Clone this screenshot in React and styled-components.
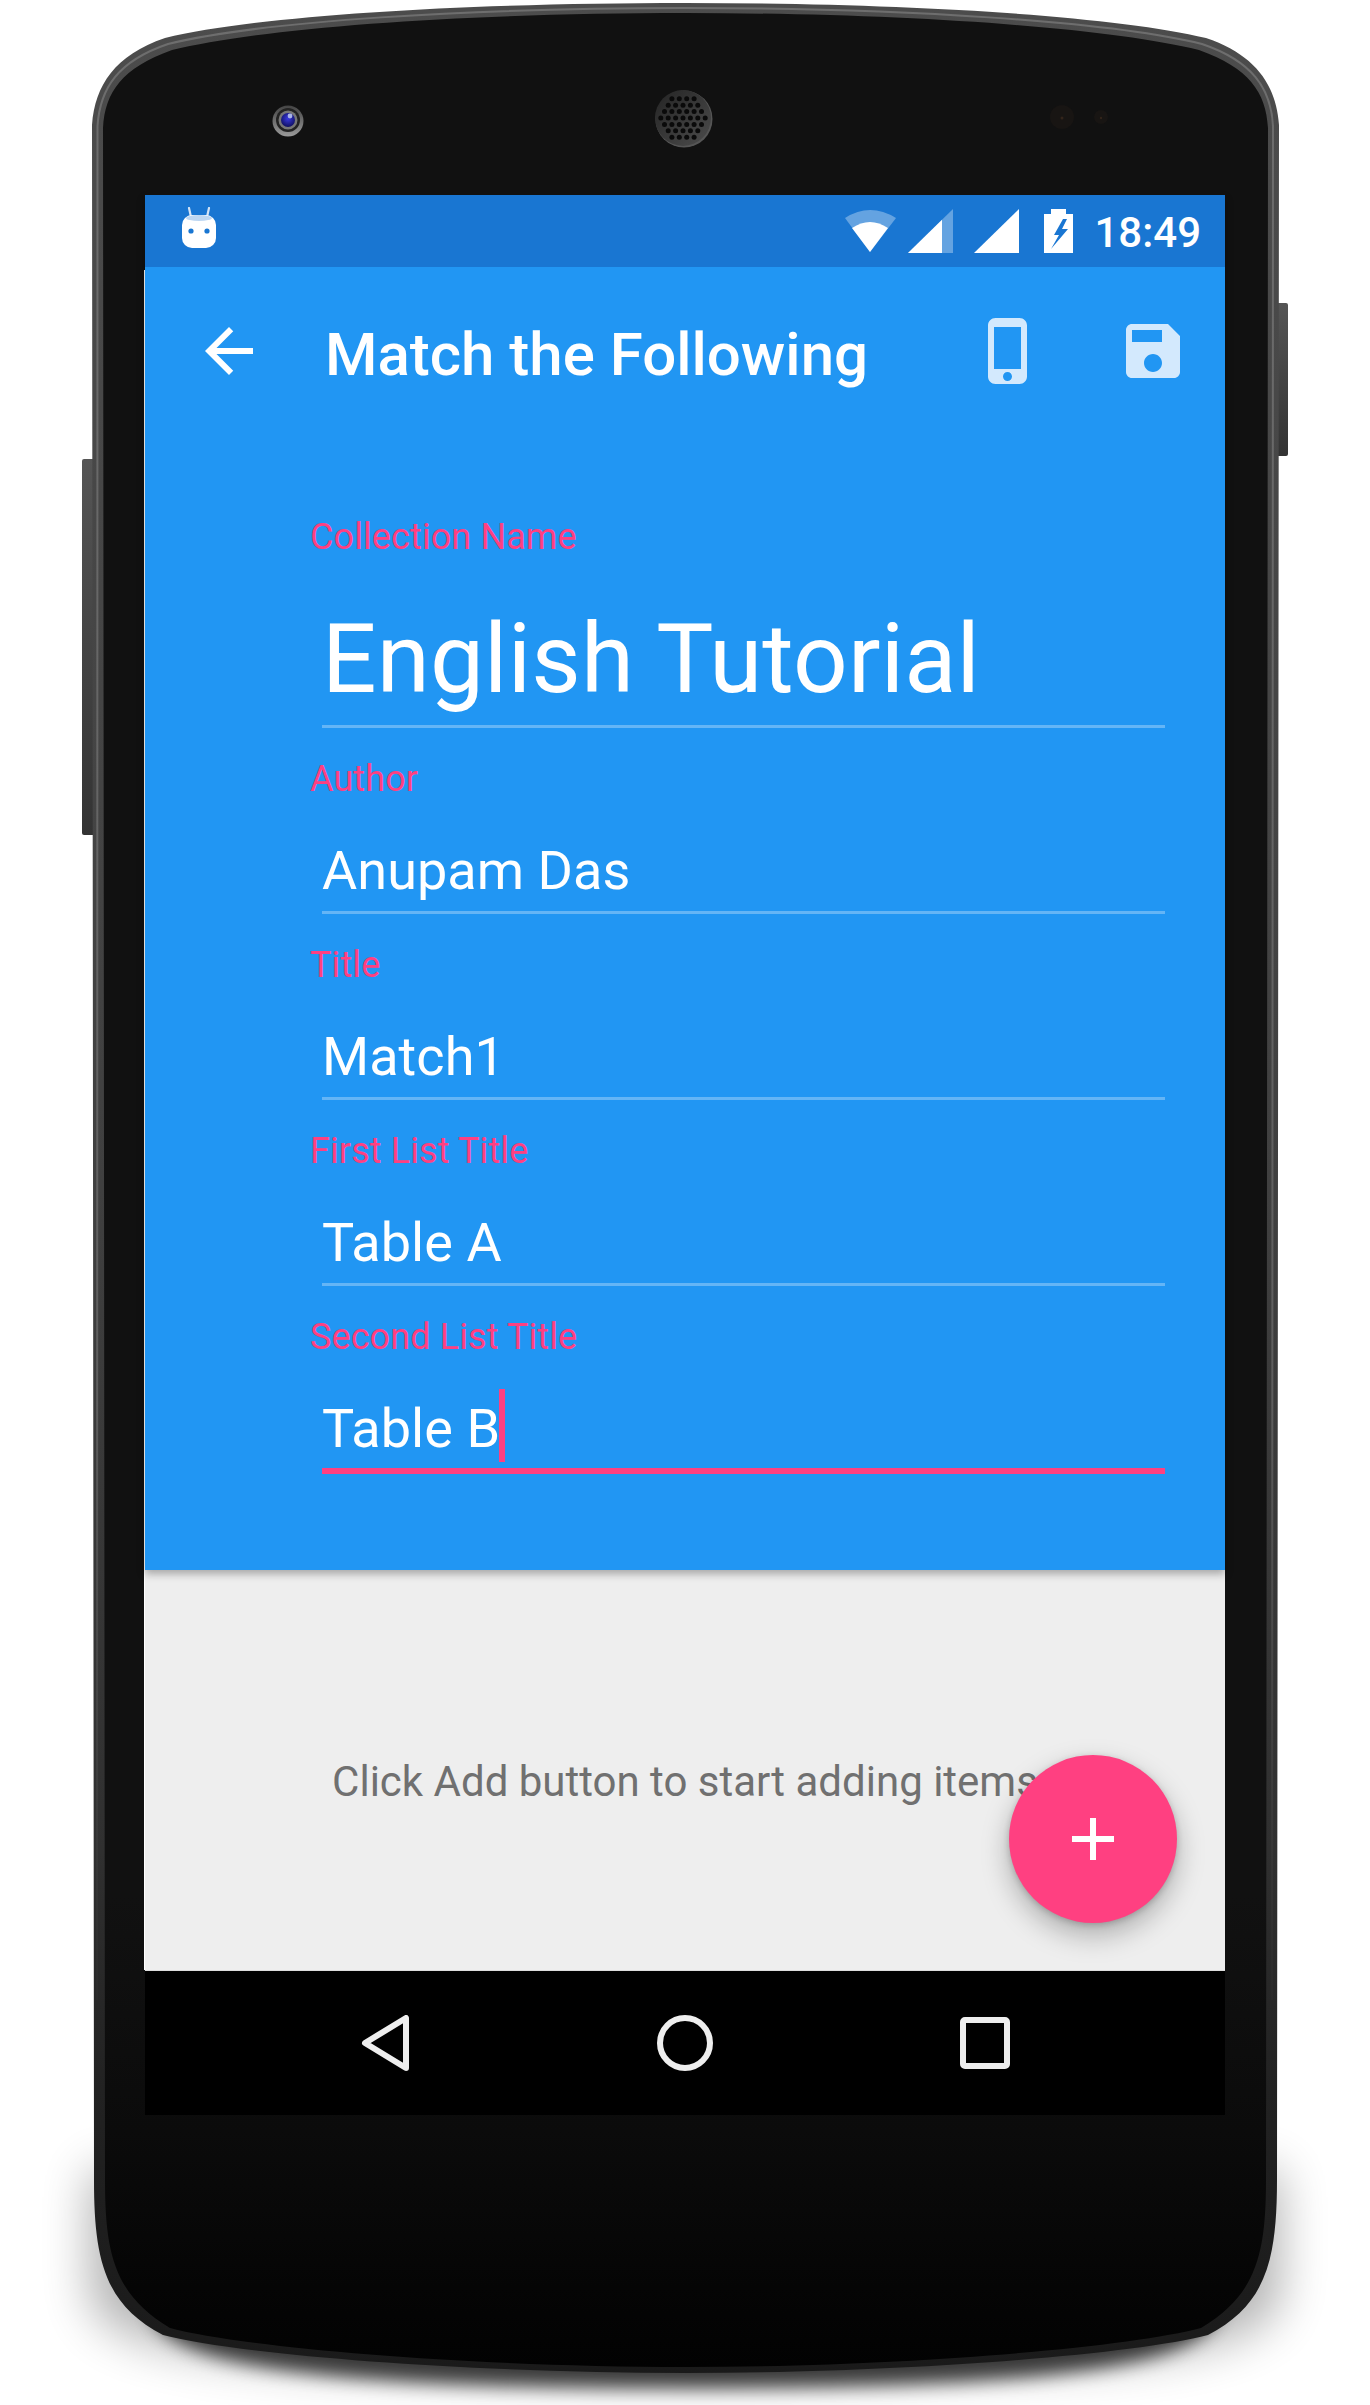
import React from 'react'
import styled, { createGlobalStyle } from 'styled-components'

const GlobalStyle = createGlobalStyle`
  html, body {
    margin: 0;
    padding: 0;
    background: #fff;
  }
  body {
    font-family: Roboto, "Liberation Sans", sans-serif;
  }
`

const fields = [
  { label: 'Collection Name', value: 'English Tutorial', large: true },
  { label: 'Author', value: 'Anupam Das' },
  { label: 'Title', value: 'Match1' },
  { label: 'First List Title', value: 'Table A' },
  { label: 'Second List Title', value: 'Table B', focused: true },
]

// speaker grille holes, hex pattern clipped to a circle
const speakerHoles = []
for (let row = -4; row <= 4; row++) {
  for (let col = -4; col <= 4; col++) {
    const x = col * 7.4 + (row % 2 ? 3.7 : 0)
    const y = row * 6.4
    if (Math.hypot(x, y) < 25) speakerHoles.push([x, y])
  }
}

const BODY_PATH =
  'M92 125 C95 85 115 55 165 38 C260 15 470 3 685 3 C900 3 1110 15 1206 38 C1256 55 1276 85 1279 125 ' +
  'L1277 2180 C1277 2260 1266 2305 1208 2335 C1131 2355 900 2373 685 2373 C470 2373 240 2355 163 2335 ' +
  'C105 2305 94 2260 94 2180 Z'

const BEZEL_PATH =
  'M103 128 C105 92 122 68 172 50 C265 27 470 13 685 13 C900 13 1106 27 1199 50 C1249 68 1266 92 1268 128 ' +
  'L1266 2180 C1266 2255 1256 2295 1201 2328 C1126 2348 900 2367 685 2367 C470 2367 245 2348 170 2328 ' +
  'C115 2295 105 2255 105 2180 Z'

// light line running along the middle of the metal rim
const RIM_HIGHLIGHT_PATH =
  'M97 2000 L97.5 126 C100 88 118 61 168 44 C262 21 470 8 685 8 C900 8 1108 21 1202 44 C1252 61 1271 88 1273 126 L1272 2000'

function PhoneHardware() {
  return (
    <Hardware viewBox="0 0 1370 2405" aria-hidden="true">
      <defs>
        <linearGradient id="rim" x1="0" y1="0" x2="0" y2="1">
          <stop offset="0" stopColor="#4c4c4c" />
          <stop offset="0.5" stopColor="#404040" />
          <stop offset="0.78" stopColor="#303030" />
          <stop offset="0.88" stopColor="#222222" />
          <stop offset="1" stopColor="#1a1a1a" />
        </linearGradient>
        <linearGradient id="rimLine" x1="0" y1="0" x2="0" y2="1">
          <stop offset="0" stopColor="#6e6e6e" />
          <stop offset="0.7" stopColor="#5e5e5e" />
          <stop offset="1" stopColor="#2a2a2a" />
        </linearGradient>
        <linearGradient id="bezel" x1="0" y1="0" x2="0" y2="1">
          <stop offset="0" stopColor="#111111" />
          <stop offset="0.8" stopColor="#111111" />
          <stop offset="0.9" stopColor="#0b0b0b" />
          <stop offset="1" stopColor="#020202" />
        </linearGradient>
        <linearGradient id="sideKey" x1="0" y1="0" x2="0" y2="1">
          <stop offset="0" stopColor="#555555" />
          <stop offset="1" stopColor="#333333" />
        </linearGradient>
        <radialGradient id="lens" cx="0.5" cy="0.4" r="0.6">
          <stop offset="0" stopColor="#3a3ae0" />
          <stop offset="1" stopColor="#101060" />
        </radialGradient>
        <linearGradient id="camRing" x1="0" y1="0" x2="0" y2="1">
          <stop offset="0" stopColor="#444444" />
          <stop offset="1" stopColor="#9a9a9a" />
        </linearGradient>
        <linearGradient id="grille" x1="0" y1="0" x2="1" y2="1">
          <stop offset="0" stopColor="#242424" />
          <stop offset="1" stopColor="#4c4c4c" />
        </linearGradient>
        <filter id="softWide" x="-10%" y="-40%" width="120%" height="180%">
          <feGaussianBlur stdDeviation="24" />
        </filter>
        <filter id="softTight" x="-10%" y="-40%" width="120%" height="180%">
          <feGaussianBlur stdDeviation="9" />
        </filter>
      </defs>

      <path d="M90 2170 H1280 V2290 C1280 2340 1200 2375 685 2375 C170 2375 90 2340 90 2290 Z" fill="#000" opacity="0.3" filter="url(#softWide)" />
      <path d="M150 2300 H1220 C1220 2350 1150 2388 685 2388 C220 2388 150 2350 150 2300 Z" fill="#000" opacity="0.72" filter="url(#softTight)" />

      <rect x="82" y="459" width="14" height="376" rx="2" fill="url(#sideKey)" />
      <rect x="1274" y="303" width="14" height="153" rx="2" fill="url(#sideKey)" />

      <path d={BODY_PATH} fill="url(#rim)" />
      <path d={RIM_HIGHLIGHT_PATH} fill="none" stroke="url(#rimLine)" strokeWidth="2" />
      <path d={BEZEL_PATH} fill="url(#bezel)" />

      <circle cx="288" cy="121" r="15.5" fill="url(#camRing)" />
      <circle cx="288" cy="120" r="12" fill="#232323" />
      <circle cx="288" cy="120" r="9.5" fill="#777" />
      <circle cx="288" cy="120" r="7" fill="url(#lens)" />
      <circle cx="290" cy="116" r="2.4" fill="#a9b4e8" />

      <circle cx="684" cy="119" r="28.5" fill="#555" />
      <circle cx="683" cy="118" r="28" fill="url(#grille)" />
      {speakerHoles.map(([x, y]) => (
        <circle key={`${x}-${y}`} cx={683 + x} cy={118 + y} r="2.5" fill="#0a0a0a" />
      ))}

      <circle cx="1062" cy="117" r="12" fill="#181513" />
      <circle cx="1062" cy="118" r="1.5" fill="#33241a" />
      <circle cx="1101" cy="117" r="7" fill="#181513" />
      <circle cx="1101" cy="118" r="1.2" fill="#33241a" />
    </Hardware>
  )
}

function RobotIcon() {
  return (
    <Robot viewBox="0 0 34 41" width="34" height="41">
      <path d="M7 1 L9 10 M27 1 L25 10" stroke="#d3e3f6" strokeWidth="2.2" strokeLinecap="round" />
      <rect x="0" y="8" width="34" height="33" rx="10" fill="#fff" />
      <ellipse cx="17" cy="11" rx="13" ry="3" fill="#bcd6f2" />
      <circle cx="9" cy="24" r="2.6" fill="#1976d2" />
      <circle cx="25" cy="24" r="2.6" fill="#1976d2" />
    </Robot>
  )
}

function WifiIcon() {
  return (
    <StatusIcon viewBox="0 0 52 42" width="52" height="42">
      <path d="M1 8 Q26 -8 52 8 L26 42 Z" fill="#fff" fillOpacity="0.33" />
      <path d="M8 18 Q26 6 44 18 L26 42 Z" fill="#fff" />
    </StatusIcon>
  )
}

function SignalIcon({ partial, $gap }) {
  return (
    <StatusIcon viewBox="0 0 45 44" width="45" height="44" $gap={$gap}>
      <path d="M0 44 L45 0 V44 Z" fill="#fff" fillOpacity={partial ? 0.33 : 1} />
      {partial && <path d="M0 44 L34 10.8 V44 Z" fill="#fff" />}
    </StatusIcon>
  )
}

function BatteryIcon() {
  return (
    <StatusIcon viewBox="0 0 29 44" width="29" height="44" $gap={25}>
      <path d="M7 0 H22 V5 H29 V44 H0 V5 H7 Z" fill="#fff" />
      <path d="M19 10 L10 26 H15 L7 40 L24 20 H18 L23 10 Z" fill="#1976d2" />
    </StatusIcon>
  )
}

function ToolbarIcon({ d, $dim }) {
  return (
    <IconButton $dim={$dim}>
      <svg viewBox="0 0 24 24" width="72" height="72" fill="currentColor">
        <path d={d} />
      </svg>
    </IconButton>
  )
}

export default function App() {
  return (
    <>
      <GlobalStyle />
      <Shell>
        <PhoneHardware />
        <Screen>
          <AppBar>
            <StatusBar>
              <RobotIcon />
              <StatusRight>
                <WifiIcon />
                <SignalIcon partial $gap={12} />
                <SignalIcon $gap={21} />
                <BatteryIcon />
                <Clock>18:49</Clock>
              </StatusRight>
            </StatusBar>
            <Toolbar>
              <BackButton>
                <svg viewBox="0 0 24 24" width="72" height="72" fill="currentColor">
                  <path d="M20 11H7.83l5.59-5.59L12 4l-8 8 8 8 1.41-1.41L7.83 13H20v-2z" />
                </svg>
              </BackButton>
              <Title>Match the Following</Title>
              <ToolbarIcon $dim d="M15.5 1h-8C6.12 1 5 2.12 5 3.5v17C5 21.88 6.12 23 7.5 23h8c1.38 0 2.5-1.12 2.5-2.5v-17C18 2.12 16.88 1 15.5 1zm-4 21c-.83 0-1.5-.67-1.5-1.5s.67-1.5 1.5-1.5 1.5.67 1.5 1.5-.67 1.5-1.5 1.5zm4.5-4H7V4h9v14z" />
              <ToolbarIcon $dim d="M17 3H5c-1.11 0-2 .9-2 2v14c0 1.1.89 2 2 2h14c1.1 0 2-.9 2-2V7l-4-4zm-5 16c-1.66 0-3-1.34-3-3s1.34-3 3-3 3 1.34 3 3-1.34 3-3 3zm3-10H5V5h10v4z" />
            </Toolbar>
            <Form>
              {fields.map((field) => (
                <Field key={field.label}>
                  <FieldLabel>{field.label}</FieldLabel>
                  <FieldValue $large={field.large} $focused={field.focused}>
                    <ValueText>
                      {field.value}
                      {field.focused && <Caret />}
                    </ValueText>
                  </FieldValue>
                </Field>
              ))}
            </Form>
          </AppBar>
          <Content>
            <EmptyText>Click Add button to start adding items</EmptyText>
            <Fab>
              <svg viewBox="0 0 42 42" width="42" height="42" fill="#fff">
                <path d="M18 0 H24 V18 H42 V24 H24 V42 H18 V24 H0 V18 H18 Z" />
              </svg>
            </Fab>
          </Content>
          <NavBar>
            <NavButton>
              <svg viewBox="0 0 48 56" width="48" height="56" fill="none" stroke="#eee" strokeWidth="6" strokeLinejoin="round">
                <path d="M45 3 V53 L4 28 Z" />
              </svg>
            </NavButton>
            <NavButton>
              <svg viewBox="0 0 56 56" width="56" height="56" fill="none" stroke="#eee" strokeWidth="6">
                <circle cx="28" cy="28" r="25" />
              </svg>
            </NavButton>
            <NavButton>
              <svg viewBox="0 0 50 52" width="50" height="52" fill="none" stroke="#eee" strokeWidth="6" strokeLinejoin="round">
                <rect x="3" y="3" width="44" height="46" rx="2" />
              </svg>
            </NavButton>
          </NavBar>
        </Screen>
      </Shell>
    </>
  )
}

const Shell = styled.div`
  position: relative;
  width: 1370px;
  height: 2405px;
  box-sizing: border-box;
  padding: 195px 145px 290px;
  overflow: hidden;
`

const Hardware = styled.svg`
  position: absolute;
  inset: 0;
  width: 1370px;
  height: 2405px;
`

const Screen = styled.div`
  position: relative;
  width: 1080px;
  height: 1920px;
  display: flex;
  flex-direction: column;
  &::before {
    content: '';
    position: absolute;
    left: -1px;
    top: 75px;
    width: 1px;
    height: 1700px;
    background: #fff;
  }
`

const AppBar = styled.header`
  position: relative;
  z-index: 1;
  height: 1375px;
  background: #2196f3;
  box-shadow: 0 4px 8px rgba(0, 0, 0, 0.3);
  flex: none;
`

const StatusBar = styled.div`
  height: 72px;
  background: #1976d2;
  display: flex;
  align-items: center;
  padding: 0 24px 0 37px;
`

const Robot = styled.svg`
  margin-bottom: 7px;
`

const StatusRight = styled.div`
  margin-left: auto;
  display: flex;
  align-items: center;
`

const StatusIcon = styled.svg`
  margin-left: ${(p) => p.$gap || 0}px;
  flex: none;
`

const Clock = styled.span`
  margin-left: 21px;
  padding-top: 3px;
  font-size: 42px;
  line-height: 49px;
  font-weight: 500;
  color: #fff;
`

const Toolbar = styled.div`
  height: 168px;
  display: flex;
  align-items: center;
  color: #fff;
`

const BackButton = styled.div`
  width: 168px;
  height: 168px;
  display: flex;
  align-items: center;
  justify-content: center;
  flex: none;
`

const IconButton = styled.div`
  width: 144px;
  height: 168px;
  display: flex;
  align-items: center;
  justify-content: center;
  flex: none;
  color: ${(p) => (p.$dim ? '#d3e9fd' : '#fff')};
`

const Title = styled.h1`
  flex: 1;
  margin: 0 0 0 12px;
  padding-top: 7px;
  font-size: 60px;
  line-height: 70px;
  font-weight: 500;
  color: #fff;
  white-space: nowrap;
`

const Form = styled.div`
  padding: 81px 60px 0 165px;
`

const Field = styled.div`
  margin-bottom: 30px;
`

const FieldLabel = styled.div`
  font-size: 36px;
  line-height: 42px;
  letter-spacing: 0.1px;
  color: #ff4081;
`

const FieldValue = styled.div`
  margin-left: 12px;
  margin-top: ${(p) => (p.$large ? 45 : 39)}px;
  padding-bottom: ${(p) => (p.$large ? 10 : p.$focused ? 7 : 8)}px;
  border-bottom: ${(p) => (p.$focused ? '6px solid #ff4081' : '3px solid rgba(255, 255, 255, 0.3)')};
  font-size: ${(p) => (p.$large ? 96 : 54)}px;
  line-height: ${(p) => (p.$large ? 112 : 64)}px;
  letter-spacing: ${(p) => (p.$large ? 0.2 : 0.05)}px;
  color: #fff;
`

const ValueText = styled.span`
  position: relative;
`

const Caret = styled.span`
  position: absolute;
  left: 100%;
  top: -8px;
  width: 6px;
  height: 73px;
  margin-left: -1px;
  background: #ff4081;
`

const Content = styled.main`
  position: relative;
  height: 400px;
  flex: none;
  background: #eeeeee;
  box-sizing: border-box;
  padding-top: 187px;
  text-align: center;
`

const EmptyText = styled.p`
  margin: 0;
  font-size: 42px;
  line-height: 49px;
  color: #707070;
`

const Fab = styled.button`
  position: absolute;
  right: 48px;
  bottom: 47px;
  width: 168px;
  height: 168px;
  padding: 0;
  border: 0;
  border-radius: 50%;
  background: #ff4081;
  display: flex;
  align-items: center;
  justify-content: center;
  box-shadow: 0 12px 28px rgba(0, 0, 0, 0.28), 0 2px 6px rgba(0, 0, 0, 0.18);
`

const NavBar = styled.nav`
  height: 145px;
  flex: none;
  background: #000;
  border-top: 1px solid #ddd;
  box-sizing: border-box;
  display: flex;
  justify-content: center;
  align-items: center;
`

const NavButton = styled.div`
  width: 300px;
  display: flex;
  justify-content: center;
  align-items: center;
`
